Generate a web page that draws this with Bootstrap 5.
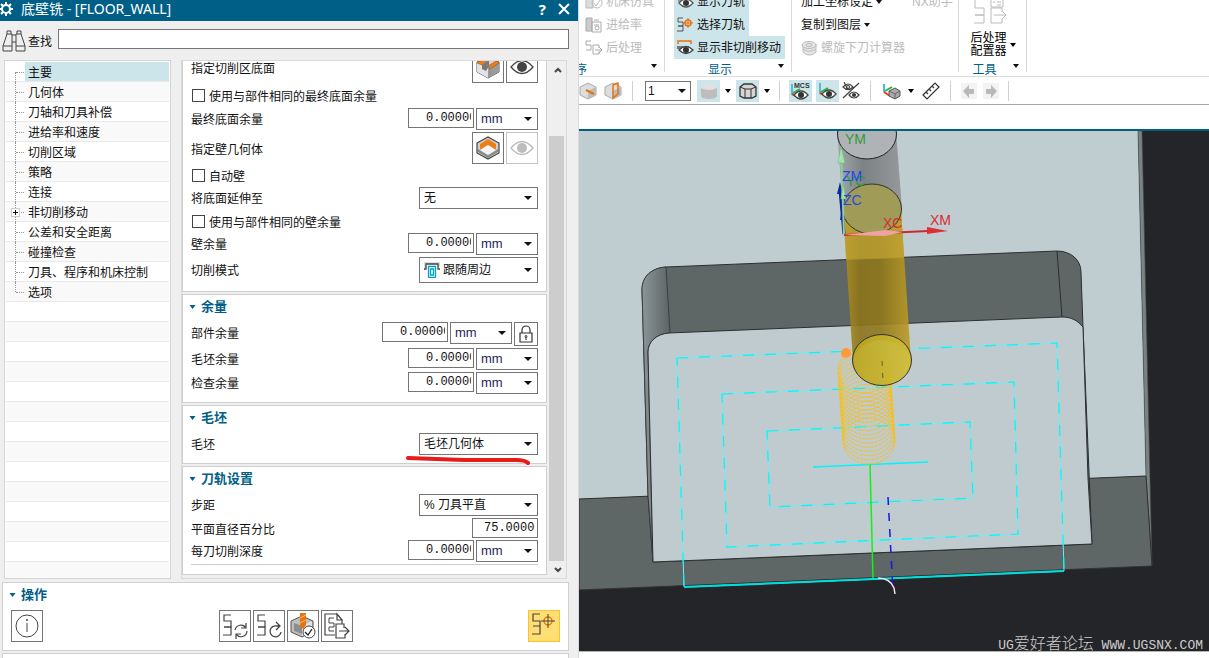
<!DOCTYPE html>
<html lang="zh-CN">
<head>
<meta charset="utf-8">
<meta name="viewport" content="width=device-width, initial-scale=1">
<title>底壁铣 - [FLOOR_WALL]</title>
<link href="https://cdn.jsdelivr.net/npm/bootstrap@5.3.0/dist/css/bootstrap.min.css" rel="stylesheet">
<style>
  :root { --nx-blue: #005f87; --nx-hl: #cce5ea; --nx-line: #cfcfcf; --nx-ctl: #757575; }
  body { font-family: "Liberation Sans", "Noto Sans CJK SC", sans-serif; font-size: 12px; line-height: 16px; color: #111; background: #fff; }
  svg { display: block; flex: none; }
  .app-grid { display: grid; grid-template-columns: minmax(0, 578fr) minmax(0, 631fr); grid-template-rows: minmax(0, 1fr); height: 100vh; overflow: hidden; }

  /* dialog */
  .dialog { background: #efefef; min-height: 0; }
  .title-bar { height: 21px; background: var(--nx-blue); color: #fff; font-family: "Noto Sans", "Noto Sans CJK SC", sans-serif; padding: 0 8px 3px 0; }
  .title-bar h1 { font-size: 14px; line-height: 18px; font-weight: 400; margin: 0 auto 0 8px; }
  .title-bar button { color: #fff; background: none; border: 0; padding: 0; line-height: 16px; }
  .title-bar .help-btn { font-size: 15px; font-weight: 700; }
  .find-row { height: 39px; padding: 1px 9px 1px 2px; }
  .find-row label { padding: 2px 0 0 2px; }
  .find-row input { height: 20px; border: 1px solid var(--nx-ctl); border-radius: 0; margin-left: 6px; padding: 0 4px; font-size: 12px; min-width: 0; margin-bottom: 3px; }
  .dialog-body { min-height: 0; display: grid; grid-template-columns: minmax(0, 167fr) minmax(0, 386fr); grid-template-rows: minmax(0, 1fr); column-gap: 10px; padding: 0 11px 0 4px; }
  .tree { border: 1px solid #d4d4d4; background: #fff; padding: 1px; overflow: hidden; }
  .tree li { height: 20px; border-bottom: 1px solid #e9e9e9; padding-left: 19px; position: relative; }
  .tree li:nth-child(even) { background: #f9f9f9; }
  .tree a { display: block; height: 19px; line-height: 23px; padding-left: 3px; color: #111; text-decoration: none; white-space: nowrap; }
  .tree a.current { background: var(--nx-hl); }
  .tree li.node::before { content: ""; position: absolute; left: 9px; top: 0; bottom: -1px; border-left: 1px dotted #999; }
  .tree li.node::after { content: ""; position: absolute; left: 10px; width: 8px; top: 10px; border-top: 1px dotted #999; }
  .tree li.first-node::before { top: 10px; }
  .tree li.last-node::before { bottom: 9px; }
  .expander { position: absolute; z-index: 1; left: 5px; top: 6px; width: 9px; height: 9px; border: 1px solid #ccc; background: #fff; padding: 0; }
  .expander svg { width: 7px; height: 7px; }

  .scroll-pane { border: 1px solid #d9d9d9; overflow: hidden; min-height: 0; }
  .sections { min-width: 0; min-height: 0; overflow: hidden; gap: 2px; }
  .sections .panel:first-child { margin-top: -11px; }
  .panel { background: #fff; border: 1px solid var(--nx-line); padding: 0 8px 6px 8px; position: relative; flex: none; }
  .panel h2 { height: 23px; margin: 0 0 4px -2px; font-size: 13px; line-height: 22px; font-weight: 700; color: var(--nx-blue); display: flex; align-items: center; gap: 5px; }
  .field { display: flex; align-items: flex-start; gap: 2px; height: 24px; }
  .field > label, .field > .caption { margin-right: auto; line-height: 22px; padding-top: 1px; white-space: nowrap; }
  .field.tall { height: 33px; }
  .field.tall > .caption { line-height: 32px; padding-top: 2px; }
  .field.lockable { height: 26px; }
  .field.mode { height: 28px; }
  .field.mode > label { line-height: 26px; }
  .field.tight { height: 22px; }
  .field.check { height: 24px; gap: 4px; align-items: center; }
  .field.check.short { height: 22px; }
  .field.check .form-check-input { width: 13px; height: 13px; margin: 0 0 2px 1px; border: 1px solid #444; border-radius: 0; flex: none; }
  .num { width: 66px; height: 20px; border: 1px solid var(--nx-ctl); border-radius: 0; padding: 0 2px 0 17px; font-family: "Liberation Mono", monospace; font-size: 12px; line-height: 18px; color: #111; flex: none; }
  .num.wide-value { padding-left: 11px; }
  .pick { --bs-form-select-bg-img: url("data:image/svg+xml,%3Csvg xmlns='http://www.w3.org/2000/svg' viewBox='0 0 8 4'%3E%3Cpath d='M0 0h8L4 4z' fill='%23111'/%3E%3C/svg%3E");
    background-image: var(--bs-form-select-bg-img); background-position: right 5px center; background-size: 8px 4px; height: 22px; border: 1px solid var(--nx-ctl); border-radius: 0; padding: 0 14px 0 4px; font-size: 12px; line-height: 20px; color: #111; flex: none; }
  .pick.unit { width: 62px; font-size: 13px; color: #1d2458; }
  .pick.long { width: 119px; }
  .pick.with-icon { height: 26px; padding-left: 23px; width: 119px; line-height: 24px; }
  .overlay-icon { position: absolute; left: 5px; top: 5px; pointer-events: none; }
  .sq { width: 32px; height: 32px; padding: 0; border: 1px solid var(--nx-ctl); border-radius: 0; background: #fff; color: #444; display: flex; align-items: center; justify-content: center; flex: none; }
  .sq:disabled { opacity: 1; border-color: #c4c4c4; color: #bdbdbd; background: #fff; }
  .sq.lock-btn { width: 24px; height: 24px; }
  .sq.hot { background: #ffdf74; border-color: #fcc32c; }
  .red-mark { position: absolute; right: 14px; bottom: -4px; }
  .end-rule { height: 0; border-top: 1px solid #ccc; margin-bottom: 3px; }
  .scroll-track { width: 17px; margin-left: 2px; background: #efefef; color: #555; }
  .scroll-track button { border: 0; padding: 0; background: none; height: 17px; width: 17px; display: flex; align-items: center; justify-content: center; }
  .scroll-track .thumb { background: #cdcdcd; width: 15px; flex: 425; }
  .scroll-track .room { flex: 58; }
  .actions { margin: 3px 9px 0 2px; height: 69px; }
  .tool-gap { gap: 2px; }
  .next-panel { margin: 2px 9px 0 2px; height: 5px; background: #fff; border: 1px solid var(--nx-line); border-bottom: 0; }

  /* ribbon */
  .main-side { border-left: 1px solid #d5dbdc; background: #fff; min-width: 0; min-height: 0; }
  .ribbon { height: 77px; border-bottom: 1px solid #dcdcdc; overflow: hidden; }
  .group { border-right: 1px solid #d9d9d9; height: 72px; position: relative; flex: none; }
  .group .items { margin-top: -10px; height: 69px; display: flex; flex-direction: column; align-items: flex-start; }
  .rib { height: 23px; border: 0; background: none; padding: 1px 4px 0 2px; display: flex; align-items: center; gap: 3px; font-size: 12px; line-height: 20px; color: #111; white-space: nowrap; }
  .rib.on { background: var(--nx-hl); }
  .rib:disabled { color: #bbb; }
  .group footer { color: var(--nx-blue); text-align: center; line-height: 22px; height: 18px; }
  .group footer svg { position: absolute; right: 7px; bottom: 4px; }
  .g-one { width: 86px; } .g-two { width: 127px; } .g-three { width: 167px; } .g-four { width: 68px; }
  .g-one .items { padding-left: 4px; } .g-two .items { padding-left: 9px; } .g-three .items { padding-left: 7px; }
  .g-one footer { text-align: left; margin-left: -4px; }
  .g-four .post { border: 0; background: none; padding: 0 8px 0 0; height: 69px; width: 100%; display: flex; flex-direction: column; align-items: center; font-size: 12px; line-height: 13px; }
  .post .name { padding-top: 2px; }
  .post .name svg { position: absolute; left: 40px; top: 13px; }
  .quick { height: 28px; border-bottom: 1px solid #a6a6a6; }
  .quick button { border: 0; padding: 0; width: 23px; height: 22px; background: none; display: flex; align-items: center; justify-content: center; flex: none; }
  .quick button.on { background: var(--nx-hl); }
  .quick button.drop { width: 16px; }
  .quick button.slim { width: 18px; }
  .quick .bar { width: 1px; height: 20px; background: #d0d0d0; margin: 0 9px; flex: none; }
  .quick .pick { width: 46px; height: 20px; line-height: 18px; padding-left: 2px; background-position: right 4px center; margin: 0 6px 0 3px; }
  .blank-strip { height: 26px; border-bottom: 2px solid var(--nx-blue); flex: none; }
  .viewport { position: relative; min-height: 0; overflow: hidden; background: #242529; }
  .viewport > svg { width: 100%; height: 100%; }
  .watermark { position: absolute; right: 6px; bottom: -5px; margin: 0; color: #ccc; font: 13px/20px "Liberation Mono", monospace; white-space: pre; }
  .watermark span { font: 300 16px/20px "Noto Sans CJK SC", sans-serif; }
  .status-strip { height: 7px; border-top: 1px solid #b5b5b5; }
</style>
</head>
<body>
<svg width="0" height="0" class="position-absolute" aria-hidden="true">
  <defs>
    <symbol id="caret" viewBox="0 0 6 4"><path d="M0 0h6L3 4z" fill="currentColor"/></symbol>
    <symbol id="eye" viewBox="0 0 24 18"><path d="M1 9Q12-4 23 9Q12 22 1 9z" fill="#fff" stroke="currentColor" stroke-width="1.300"/><circle cx="12" cy="9" r="5" fill="currentColor"/></symbol>
    <symbol id="hexbox" viewBox="0 0 24 24"><path d="M1 7L12 1l11 6v10l-11 6L1 17z" fill="#d6d6d6" stroke="#555"/><path d="M12 12v11l11-6V7z" fill="#9b9b9b"/><path d="M1 7l11 5v11L1 17z" fill="#e3e3e3"/></symbol>
    <symbol id="slot" viewBox="0 0 24 24"><use href="#hexbox"/><path d="M1 8l8-5 4 2-7 5zM12 11l8-5 3 2-9 6z" fill="#ef7d16" stroke="#8c4a10" stroke-width=".5"/><path d="M6 10l7-5v6l-3 5-4-2z" fill="#777"/><path d="M10 9l4 4v9" fill="none" stroke="#888"/></symbol>
    <symbol id="pocket" viewBox="0 0 24 24"><path d="M1 7L12 1l11 6v10l-11 6L1 17z" fill="#d0d0d0" stroke="#444" stroke-width="1.200"/><path d="M2 16l10 6 10-6v-3l-10 6-10-6z" fill="#8b8b8b"/><path d="M4 8l8-5 8 5v6l-8-5-8 5z" fill="#ef7d16"/><path d="M4 14l8-5 8 5-8 5z" fill="#f4f4f4"/></symbol>
    <symbol id="lock" viewBox="0 0 14 18"><path d="M1 8h12v9H1zM3 8V5a4 4 0 018 0v3" fill="none" stroke="#333" stroke-width="1.200"/><circle cx="7" cy="11.500" r="1" fill="none" stroke="#333"/><path d="M7 12v3" stroke="#333"/></symbol>
    <symbol id="path" viewBox="0 0 28 28"><path d="M10 3H3v6h7v6H3M10 15v0M3 15h0" fill="none" stroke="#444" stroke-width="1.200"/><path d="M3 15h7v8H2" fill="none" stroke="#444" stroke-width="1.200"/></symbol>
    <symbol id="cyc" viewBox="0 0 28 28"><use href="#path"/><path d="M14 18a6 6 0 0111-2M25 11v5h-5M26 19a6 6 0 01-11 3M15 27v-5h5" fill="none" stroke="#444" stroke-width="1.200"/></symbol>
    <symbol id="redo" viewBox="0 0 28 28"><use href="#path"/><path d="M26 20a5.500 5.500 0 11-4-6h3M21 10l4 4-4 4" fill="none" stroke="#444" stroke-width="1.300"/></symbol>
    <symbol id="drill" viewBox="0 0 28 28"><path d="M2 9l11-5 11 5v10l-11 6-11-5z" fill="#bfbfbf" stroke="#555"/><path d="M5 11l8 3v8l-8-3z" fill="#8e8e8e"/><path d="M13 14l10-5v10l-10 5z" fill="#e4e4e4"/><path d="M11 1h6v12l-3 4-3-2z" fill="#e8720c"/><path d="M11 6l6-3M11 11l6-3" stroke="#ffc27a"/><circle cx="20" cy="20" r="6" fill="#fff" stroke="#444"/><path d="M16 20l3 3 4-6" fill="none" stroke="#222" stroke-width="1.300"/></symbol>
    <symbol id="export" viewBox="0 0 28 28"><path d="M14 2H2v21h10M14 2l5 6h-5zM19 8v4" fill="none" stroke="#444" stroke-width="1.200"/><path d="M11 6H6v5h5v4H6v4h5" fill="none" stroke="#444"/><path d="M21 16v-4h-8v14h9v-4M16 19h10M22 15l4 4-4 4" fill="none" stroke="#444" stroke-width="1.200"/></symbol>
    <symbol id="target" viewBox="0 0 28 28"><path d="M10 2H3v7h7v5H3h7v8H2" fill="none" stroke="#444" stroke-width="1.200"/><circle cx="18" cy="9" r="4" fill="none" stroke="#e8720c" stroke-width="1.400"/><path d="M18 2v14M11 9h14" stroke="#444"/></symbol>
    <symbol id="r-eye" viewBox="0 0 18 16"><path d="M2 1v5M2 2h4M2 7h3" stroke="#555" fill="none"/><path d="M3 9Q10 1 17 9Q10 17 3 9z" fill="#fff" stroke="#555" stroke-width="1.300"/><circle cx="10" cy="9" r="3" fill="#333"/></symbol>
    <symbol id="axis-eye" viewBox="0 0 18 18"><path d="M1 1v11" stroke="#18a3c4" stroke-width="1.300"/><path d="M2 10l7-4" stroke="#27b43e" stroke-width="2"/><path d="M1 11l4 2" stroke="#e33" stroke-width="2"/><path d="M3 12Q10 4 17 12Q10 20 3 12z" fill="#fff" stroke="#444" stroke-width="1.300"/><circle cx="10" cy="12" r="3" fill="#333"/></symbol>
    <symbol id="cylinder" viewBox="0 0 18 18"><path d="M1 5v9c0 4 16 4 16 0V5z" fill="#bdbdbd"/><ellipse cx="9" cy="5" rx="8" ry="3" fill="#e0e0e0"/></symbol>
    <symbol id="edgebox" viewBox="0 0 18 18"><path d="M1 5l4-3h8l4 3v9l-4 2H5l-4-2z" fill="#d5d5d5" stroke="#333" stroke-width="1.300"/><path d="M1 5l5 2h6l5-2M6 7v9M12 7v9" fill="none" stroke="#333"/></symbol>
    <symbol id="cube-grey" viewBox="0 0 18 18"><path d="M1 5l8-4 8 4v8l-8 4-8-4z" fill="#ddd" stroke="#aaa"/><path d="M9 9l8-4v8l-8 4z" fill="#bbb"/></symbol>
    <linearGradient id="shank" x1="0" x2="1"><stop offset="0" stop-color="#a4a9ac"/><stop offset=".4" stop-color="#7c8184"/><stop offset="1" stop-color="#96999c"/></linearGradient>
    <linearGradient id="gold" x1="0" x2="1"><stop offset="0" stop-color="#b08f1c"/><stop offset=".25" stop-color="#8c741c"/><stop offset=".55" stop-color="#8f781b"/><stop offset="1" stop-color="#bf9c24"/></linearGradient>
    <linearGradient id="goldend" x1="0" x2="1"><stop offset="0" stop-color="#b9a51d"/><stop offset="1" stop-color="#d2bd31"/></linearGradient>
    <linearGradient id="corner" x1="0" x2="1"><stop offset="0" stop-color="#8b9597"/><stop offset="1" stop-color="#5c6465"/></linearGradient>
  </defs>
</svg>

<div class="app-grid">
  <section class="dialog d-flex flex-column" aria-label="底壁铣">
    <header class="title-bar d-flex align-items-center flex-shrink-0">
      <svg width="13" height="16" viewBox="0 0 13 16" fill="none" stroke="#fff"><circle cx="6" cy="8" r="4" stroke-width="2"/><path d="M6 1v3M6 12v3M-1 8h3M10 8h3M1 3l2 2M11 3L9 5M1 13l2-2M11 13l-2-2" stroke-width="2"/></svg>
      <h1>底壁铣 - [FLOOR_WALL]</h1>
      <button class="help-btn me-2" aria-label="帮助">?</button>
      <button aria-label="关闭" class="ms-1"><svg width="12" height="12" viewBox="0 0 12 12"><path d="M1 1l10 10M11 1L1 11" stroke="#fff" stroke-width="2"/></svg></button>
    </header>
    <div class="find-row d-flex align-items-center flex-shrink-0">
      <svg width="24" height="24" viewBox="0 0 24 24" fill="none" stroke="#444"><path d="M1 17l4-12h5v17H1zM5 5V2h4v3M14 5h5l4 12v5h-9zM15 5V2h4v3M10 6h4M10 13h4M1 17h9M14 17h9"/></svg>
      <label for="find">查找</label>
      <input id="find" type="text" class="flex-grow-1">
    </div>

    <div class="dialog-body flex-grow-1">
      <ul class="tree list-unstyled mb-0">
        <li class="node first-node"><a href="#" class="current">主要</a></li>
        <li class="node"><a href="#">几何体</a></li>
        <li class="node"><a href="#">刀轴和刀具补偿</a></li>
        <li class="node"><a href="#">进给率和速度</a></li>
        <li class="node"><a href="#">切削区域</a></li>
        <li class="node"><a href="#">策略</a></li>
        <li class="node"><a href="#">连接</a></li>
        <li class="node"><button class="expander" aria-label="展开"><svg viewBox="0 0 7 7"><path d="M1 3.500h5M3.500 1v5" stroke="#111"/></svg></button><a href="#">非切削移动</a></li>
        <li class="node"><a href="#">公差和安全距离</a></li>
        <li class="node"><a href="#">碰撞检查</a></li>
        <li class="node"><a href="#">刀具、程序和机床控制</a></li>
        <li class="node last-node"><a href="#">选项</a></li>
        <li></li><li></li><li></li><li></li><li></li><li></li><li></li><li></li><li></li><li></li><li></li><li></li><li></li><li></li>
      </ul>

      <div class="scroll-pane d-flex">
        <div class="sections d-flex flex-column flex-grow-1">
          <div class="panel">
            <div class="field tall"><span class="caption">指定切削区底面</span>
              <button class="sq" aria-label="指定切削区底面"><svg width="24" height="24"><use href="#slot"/></svg></button>
              <button class="sq" aria-label="显示"><svg width="24" height="18"><use href="#eye"/></svg></button></div>
            <div class="field check"><input class="form-check-input" type="checkbox" id="c1"><label for="c1">使用与部件相同的最终底面余量</label></div>
            <div class="field"><label for="n1">最终底面余量</label><input class="num" id="n1" value="0.00000"><select class="form-select pick unit" aria-label="单位"><option>mm</option></select></div>
            <div class="field tall"><span class="caption">指定壁几何体</span>
              <button class="sq" aria-label="指定壁几何体"><svg width="24" height="24"><use href="#pocket"/></svg></button>
              <button class="sq" disabled aria-label="显示"><svg width="24" height="18"><use href="#eye"/></svg></button></div>
            <div class="field check short"><input class="form-check-input" type="checkbox" id="c2"><label for="c2">自动壁</label></div>
            <div class="field"><label for="s1">将底面延伸至</label><select class="form-select pick long" id="s1"><option>无</option></select></div>
            <div class="field check short"><input class="form-check-input" type="checkbox" id="c3"><label for="c3">使用与部件相同的壁余量</label></div>
            <div class="field"><label for="n2">壁余量</label><input class="num" id="n2" value="0.00000"><select class="form-select pick unit" aria-label="单位"><option>mm</option></select></div>
            <div class="field mode"><label for="s2">切削模式</label>
              <div class="position-relative"><select class="form-select pick with-icon" id="s2"><option>跟随周边</option></select>
                <svg class="overlay-icon" width="16" height="16" viewBox="0 0 16 16" fill="none"><path d="M0 0h16v5h-3V2H3v5H0z" fill="#ddd"/><path d="M0 7h2V2h12v5h2" stroke="#444" stroke-width="1.300"/><path d="M4.500 4.500h7v11h-7zM6.500 7h3v6h-3z" stroke="#00a0c8" stroke-width="1.300"/></svg></div></div>
          </div>

          <div class="panel">
            <h2><svg width="7" height="4"><use href="#caret"/></svg>余量</h2>
            <div class="field lockable"><label for="n3">部件余量</label><input class="num" id="n3" value="0.00000"><select class="form-select pick unit" aria-label="单位"><option>mm</option></select>
              <button class="sq lock-btn" aria-label="锁定"><svg width="14" height="18"><use href="#lock"/></svg></button></div>
            <div class="field"><label for="n4">毛坯余量</label><input class="num" id="n4" value="0.00000"><select class="form-select pick unit" aria-label="单位"><option>mm</option></select></div>
            <div class="field"><label for="n5">检查余量</label><input class="num" id="n5" value="0.00000"><select class="form-select pick unit" aria-label="单位"><option>mm</option></select></div>
          </div>

          <div class="panel">
            <h2><svg width="7" height="4"><use href="#caret"/></svg>毛坯</h2>
            <div class="field"><label for="s3">毛坯</label><select class="form-select pick long" id="s3"><option>毛坯几何体</option></select></div>
            <svg class="red-mark" width="128" height="12" viewBox="0 0 128 12"><path d="M4 3L60 5L112 5Q121 5 124 8" fill="none" stroke="#e81b1b" stroke-width="4" stroke-linecap="round"/></svg>
          </div>

          <div class="panel">
            <h2><svg width="7" height="4"><use href="#caret"/></svg>刀轨设置</h2>
            <div class="field"><label for="s4">步距</label><select class="form-select pick long" id="s4"><option>% 刀具平直</option></select></div>
            <div class="field tight"><label for="n6">平面直径百分比</label><input class="num wide-value" id="n6" value="75.00000"></div>
            <div class="field"><label for="n7">每刀切削深度</label><input class="num" id="n7" value="0.00000"><select class="form-select pick unit" aria-label="单位"><option>mm</option></select></div>
            <div class="end-rule"></div>
          </div>
        </div>
        <div class="scroll-track d-flex flex-column flex-shrink-0">
          <button aria-label="向上"><svg width="8" height="6" viewBox="0 0 8 6"><path d="M1 5l3-3 3 3" fill="none" stroke="#444" stroke-width="2"/></svg></button>
          <div class="room"></div>
          <div class="thumb"></div>
          <button aria-label="向下"><svg width="8" height="6" viewBox="0 0 8 6"><path d="M1 1l3 3 3-3" fill="none" stroke="#444" stroke-width="2"/></svg></button>
        </div>
      </div>
    </div>

    <div class="panel actions">
      <h2><svg width="7" height="4"><use href="#caret"/></svg>操作</h2>
      <div class="d-flex tool-gap">
        <button class="sq" aria-label="信息"><svg width="24" height="24" viewBox="0 0 24 24"><circle cx="12" cy="12" r="11" fill="none" stroke="#444"/><path d="M12 9v9" stroke="#444"/><circle cx="12" cy="6" r="1" fill="#444"/></svg></button>
        <div class="d-flex mx-auto tool-gap">
          <button class="sq" aria-label="生成"><svg width="28" height="28"><use href="#cyc"/></svg></button>
          <button class="sq" aria-label="重播"><svg width="28" height="28"><use href="#redo"/></svg></button>
          <button class="sq" aria-label="确认"><svg width="28" height="28"><use href="#drill"/></svg></button>
          <button class="sq" aria-label="列表"><svg width="28" height="28"><use href="#export"/></svg></button>
        </div>
        <button class="sq hot" aria-label="选择刀轨"><svg width="28" height="28"><use href="#target"/></svg></button>
      </div>
    </div>
    <div class="next-panel flex-shrink-0"></div>
  </section>

  <main class="main-side d-flex flex-column">
    <div class="ribbon d-flex flex-shrink-0">
      <div class="group g-one">
        <div class="items">
          <button class="rib" disabled><svg width="18" height="16" viewBox="0 0 18 16" fill="none" stroke="#bbb"><path d="M1 1h7v13H1z" fill="#ddd"/><circle cx="12" cy="9" r="5"/><path d="M9 9l2 3 4-6"/></svg>机床仿真</button>
          <button class="rib" disabled><svg width="18" height="16" viewBox="0 0 18 16" fill="none" stroke="#aaa"><path d="M1 1h6v13H1z" fill="#ccc"/><path d="M7 5h9v10H7zM9 3h5M9 8h5"/><circle cx="12" cy="11" r="2"/></svg>进给率</button>
          <button class="rib" disabled><svg width="18" height="16" viewBox="0 0 18 16" fill="none" stroke="#aaa"><path d="M6 1H1v4h5v5H1M14 8V5H8v9h6v-3M10 10h7M14 7l3 3-3 3"/></svg>后处理</button>
        </div>
        <footer>序<svg width="6" height="4" color="#111"><use href="#caret"/></svg></footer>
      </div>
      <div class="group g-two">
        <div class="items">
          <button class="rib on"><svg width="18" height="16"><use href="#r-eye"/></svg>显示刀轨</button>
          <button class="rib on"><svg width="18" height="16" viewBox="0 0 18 16" fill="none" stroke="#555"><path d="M7 1H2v4h5v4H2h5v5H1"/><circle cx="12" cy="6" r="3" stroke="#e8720c" stroke-width="1.500"/><path d="M12 1v10M7 6h10" stroke="#e8720c"/></svg>选择刀轨</button>
          <button class="rib on"><svg width="18" height="16" viewBox="0 0 18 16" fill="none"><path d="M2 4V1h13v3" stroke="#e8720c" stroke-width="1.500"/><path d="M1 6h12v3H1z" fill="#777"/><path d="M3 10Q10 3 17 10Q10 17 3 10z" fill="#fff" stroke="#444" stroke-width="1.300"/><circle cx="10" cy="10" r="3" fill="#333"/></svg>显示非切削移动</button>
        </div>
        <footer class="pe-3">显示<svg width="6" height="4" color="#111"><use href="#caret"/></svg></footer>
      </div>
      <div class="group g-three">
        <div class="items">
          <div class="d-flex"><button class="rib">加工坐标设定<svg width="6" height="4"><use href="#caret"/></svg></button><button class="rib ms-4" disabled>NX助手</button></div>
          <button class="rib">复制到图层<svg width="6" height="4"><use href="#caret"/></svg></button>
          <button class="rib" disabled><svg width="17" height="16" viewBox="0 0 17 16" fill="#e5e5e5" stroke="#bbb"><path d="M2 5v7c3 4 10 4 13 0V4"/><ellipse cx="8" cy="5" rx="7" ry="3.500"/><ellipse cx="8" cy="5" rx="3" ry="1.500"/><path d="M2 9c4 3 9 3 13 0" fill="none"/></svg>螺旋下刀计算器</button>
        </div>
      </div>
      <div class="group g-four">
        <div class="items">
          <button class="post"><svg width="36" height="28" viewBox="0 0 36 28" class="mt-2 mb-1" fill="none" stroke="#bbb"><path d="M13 1H4v9h9v7H4h9v8H3M20 1h12v8H20zM26 4h4M22 4h2M26 7h4M31 14v-4H20v15h11v-4M23 17h12M31 13l4 4-4 4"/></svg>
            <span class="name position-relative text-start">后处理<br>配置器<svg width="6" height="4"><use href="#caret"/></svg></span></button>
        </div>
        <footer class="pe-3">工具<svg width="6" height="4" color="#111"><use href="#caret"/></svg></footer>
      </div>
    </div>

    <div class="quick d-flex align-items-center flex-shrink-0">
      <button class="slim me-1" aria-label="切面"><svg width="18" height="18" viewBox="0 0 18 18"><use href="#cube-grey"/><path d="M7 8l8 4" stroke="#e8720c" stroke-width="2"/></svg></button>
      <button aria-label="剖视"><svg width="18" height="18" viewBox="0 0 18 18"><use href="#cube-grey"/><path d="M9 3l5-2v11l-5 4z" fill="none" stroke="#e8720c" stroke-width="1.500"/></svg></button>
      <span class="bar ms-2"></span>
      <select class="form-select pick" aria-label="图层"><option>1</option></select>
      <button class="on" aria-label="着色"><svg width="18" height="18"><use href="#cylinder"/></svg></button>
      <button class="drop" aria-label="着色选项"><svg width="6" height="4"><use href="#caret"/></svg></button>
      <button class="on" aria-label="带边着色"><svg width="18" height="18"><use href="#edgebox"/></svg></button>
      <button class="drop" aria-label="边选项"><svg width="6" height="4"><use href="#caret"/></svg></button>
      <span class="bar ms-1"></span>
      <button class="on" aria-label="MCS"><svg width="20" height="20" viewBox="0 0 20 20"><use href="#axis-eye" x="0" y="2" width="18" height="18"/><text x="3" y="7" font-size="7" font-weight="700" fill="#333">MCS</text></svg></button>
      <button class="on ms-1" aria-label="WCS"><svg width="18" height="18"><use href="#axis-eye"/></svg></button>
      <button aria-label="显示和隐藏"><svg width="18" height="18" viewBox="0 0 18 18" fill="none" stroke="#444" stroke-width="1.200"><path d="M1 5Q6-1 11 5Q6 10 1 5zM7 13Q12 7 17 13Q12 19 7 13zM17 1L1 16M2 0l4 8"/><circle cx="6" cy="5" r="1.500"/><circle cx="12" cy="13" r="1.500" fill="#333"/></svg></button>
      <span class="bar ms-2"></span>
      <button aria-label="定向"><svg width="18" height="18" viewBox="0 0 18 18"><path d="M1 2v8" stroke="#18a3c4" stroke-width="1.500"/><path d="M2 9l7-4" stroke="#27b43e" stroke-width="2"/><path d="M1 10l6 4" stroke="#e33" stroke-width="2"/><path d="M6 9l6-3 5 3v5l-5 3-6-3z" fill="#aaa" stroke="#555"/><path d="M6 9l6 3 5-3M12 12v5" fill="none" stroke="#666"/></svg></button>
      <button class="drop" aria-label="定向选项"><svg width="6" height="4"><use href="#caret"/></svg></button>
      <button aria-label="测量"><svg width="18" height="18" viewBox="0 0 18 18"><path d="M1 13L13 1l4 4L5 17zM4 10l2 2M7 7l2 2M10 4l2 2" fill="none" stroke="#333" stroke-width="1.200"/></svg></button>
      <span class="bar ms-2"></span>
      <button class="slim" aria-label="后退"><svg width="16" height="16" viewBox="0 0 16 16"><path d="M0 0h16v16H0z" fill="#f3f3f3"/><path d="M2 8l6-6v4h5v5H8v4z" fill="#b8b8b8"/></svg></button>
      <button class="slim ms-1" aria-label="前进"><svg width="16" height="16" viewBox="0 0 16 16"><path d="M0 0h16v16H0z" fill="#f3f3f3"/><path d="M14 8L8 2v4H3v5h5v4z" fill="#b8b8b8"/></svg></button>
      <span class="bar ms-2"></span>
    </div>
    <div class="blank-strip"></div>

    <div class="viewport flex-grow-1">
      <svg viewBox="579 131 630 520" preserveAspectRatio="xMidYMid slice" font-family="Liberation Sans, sans-serif" font-size="14">
        <path d="M579 131H1138L1146 476L579 499z" fill="#c0cdd0"/>
        <path d="M1138 131h4L1152 565L1146 476z" fill="#788384" stroke="#444" stroke-width=".6"/>
        <path d="M579 499L1146 476L1152 566L579 590z" fill="#5e6666" stroke="#333"/>
        <path d="M642 290C642 276 652 268 666 267L1057 251C1071 251 1081 260 1081 272L1083 327L1092 544L653 562L648 495z" fill="#5e6666" stroke="#2c2f30"/>
        <path d="M642 290C642 276 652 268 666 267L670 333C656 334 648 342 648 352L653 562L648 495z" fill="url(#corner)" stroke="#333" stroke-width=".8"/>
        <path d="M653 562L648 352C648 342 656 334 669 333L1062 317C1072 317 1078 321 1083 327L1088 478L1092 544z" fill="#bfcbcf" stroke="#2c2f30"/>
        <path d="M1057 251L1062 317" stroke="#2c2f30"/>
        <g fill="none" stroke="#6ceff2">
          <path d="M677 358L1057 343L1064 571L684 587z"/><path d="M722 394L1014 382L1018 534L727 547z"/><path d="M767 431L970 422L973 498L770 507z"/>
        </g>
        <g fill="none" stroke="#00f8fa" stroke-width="1.200" stroke-dasharray="11 11">
          <path d="M677 358L1057 343L1064 571L684 587z"/><path d="M722 394L1014 382L1018 534L727 547z"/><path d="M767 431L970 422L973 498L770 507z"/>
        </g>
        <path d="M813 467L928 462" stroke="#00f5f5" stroke-width="1.500"/>
        <path d="M684 587L1064 571" stroke="#0dd" stroke-width="2"/>
        <path d="M870 464L873 578" stroke="#16f016" stroke-width="1.500"/>
        <path d="M888 497L893 592" stroke="#1616e8" stroke-width="1.500" stroke-dasharray="8 8"/>
        <path d="M878 578Q890 578 894 588L895 594" fill="none" stroke="#f8dce6" stroke-width="1.500"/>
        <g id="helix" fill="none" stroke="#ffbf0a" stroke-width="1" stroke-dasharray="3 1"></g>
        <circle cx="846" cy="353" r="5" fill="#ff9a3c"/>
        <path d="M837 131H896L902 209H843z" fill="url(#shank)"/>
        <ellipse cx="867" cy="134" rx="29.500" ry="25" fill="#b0b3b5" stroke="#222"/>
        <path d="M843 209H901L911 361A29.500 25.500 0 0 0 853 361z" fill="url(#gold)" fill-opacity=".9"/>
        <path d="M843 209H901L904 258L846 260z" fill="#c5a62f" fill-opacity=".6"/>
        <ellipse cx="872" cy="209" rx="29.500" ry="25" fill="#a09b57" stroke="#333"/>
        <ellipse cx="882" cy="360" rx="29.500" ry="25.500" fill="url(#goldend)" fill-opacity=".9" stroke="#333"/>
        <path d="M882 361l1 20" stroke="#665c20" stroke-dasharray="5 7"/>
        <path d="M844 234L840 190" stroke="#0c2a9c" stroke-width="3"/><path d="M840 182l3 12h-6zM842 206l3 14h-5z" fill="#0c2a9c"/>
        <path d="M844 234L841 150" stroke="#8fcf9b" stroke-width="2"/><path d="M841 146l4 17h-7zM843 183l3 16h-5z" fill="#a5e2ae" stroke="#6bb37a" stroke-width=".5"/>
        <path d="M844 235L928 231" stroke="#c92a32" stroke-width="2"/><path d="M844 235L886 230L903 232L885 236z" fill="#efa2a2"/><path d="M948 231L927 227V234z" fill="#dd2f35"/>
        <g fill="#2d9c37"><text x="845" y="144">YM</text><text x="846" y="186">YC</text></g>
        <g fill="#1c48f0"><text x="842" y="181">ZM</text><text x="843" y="205">ZC</text></g>
        <g fill="#d92b30"><text x="883" y="228">XC</text><text x="930" y="225">XM</text></g>
      </svg>
      <p class="watermark">UG<span>爱好者论坛</span> WWW.UGSNX.COM</p>
    </div>
    <div class="status-strip flex-shrink-0"></div>
  </main>
</div>
<script src="https://cdn.jsdelivr.net/npm/bootstrap@5.3.0/dist/js/bootstrap.bundle.min.js"></script>
<script>
  // helical ramp-in: one ring per turn
  const helix = document.getElementById('helix');
  const turns = 18;
  for (let i = 0; i < turns; i++) {
    const t = i / (turns - 1);
    const ring = document.createElementNS('http://www.w3.org/2000/svg', 'ellipse');
    ring.setAttribute('cx', 864 + 5 * t);
    ring.setAttribute('cy', 370 + 71 * t);
    ring.setAttribute('rx', 26);
    ring.setAttribute('ry', 23);
    helix.appendChild(ring);
  }
</script>
</body>
</html>
